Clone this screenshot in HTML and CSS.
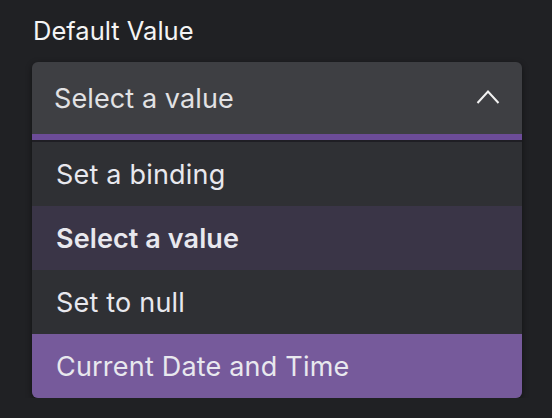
FILE: index.html
```
<!DOCTYPE html>
<html>
<head>
<meta charset="utf-8">
<link rel="stylesheet" href="styles.css">
</head>
<body>
<div class="field">
  <div class="label">Default Value</div>
  <div class="dropdown">
    <div class="select">
      <span class="select-text">Select a value</span>
      <svg class="chevron" width="24" height="14" viewBox="0 0 24 14"><path d="M1.5 13 L12 1.5 L22.5 13" fill="none" stroke="#f2f2f2" stroke-width="2"/></svg>
    </div>
    <div class="menu">
      <div class="item">Set a binding</div>
      <div class="item hover">Select a value</div>
      <div class="item">Set to null</div>
      <div class="item active">Current Date and Time</div>
    </div>
  </div>
</div>
</body>
</html>
```
FILE: styles.css
```
html, body {
  margin: 0;
  padding: 0;
  background: #202124;
  font-family: Inter, "Noto Sans", sans-serif;
  -webkit-font-smoothing: antialiased;
}
.field {
  padding: 16px 30px 0 32px;
  width: 490px;
}
.label {
  color: #f4f4f4;
  font-size: 25.5px;
  line-height: 30px;
  padding-left: 1px;
  margin-bottom: 16px;
}
.dropdown {
  border-radius: 6px;
  box-shadow: 0 2px 6px rgba(0,0,0,0.45);
}
.select {
  height: 72px;
  background: #3e3f43;
  border-radius: 6px 6px 0 0;
  border-bottom: 6px solid #6c4c98;
  display: flex;
  align-items: center;
  justify-content: space-between;
  padding: 0 22px 0 22px;
}
.select-text {
  color: #e2e2e4;
  font-size: 27px;
  letter-spacing: 0.1px;
}
.chevron {
  display: block;
  margin-top: -2px;
}
.menu {
  border-top: 2px solid #1f1e24;
  background: #2f3034;
  border-radius: 0 0 6px 6px;
  overflow: hidden;
}
.item {
  height: 64px;
  display: flex;
  align-items: center;
  padding-left: 24px;
  color: #e8e8ee;
  font-size: 27px;
  letter-spacing: 0.2px;
}
.item.hover {
  background: #3a3547;
  font-weight: 600;
  letter-spacing: 0.1px;
}
.item.active {
  background: #765a9b;
}
```
